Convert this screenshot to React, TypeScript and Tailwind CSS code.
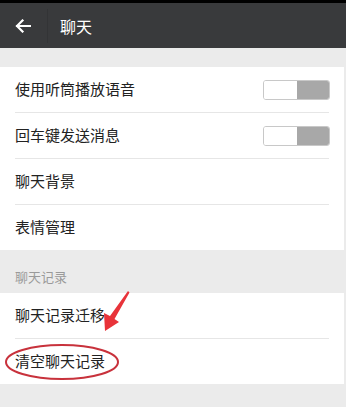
const font = { fontFamily: '"Noto Sans CJK SC", "Noto Sans", sans-serif' };

const Toggle = () => (
  <div className="flex h-[20px] w-[67px] overflow-hidden rounded-[3px] border border-[#c8c8c8]">
    <div className="w-[33px] bg-white" />
    <div className="flex-1 bg-[#a8a8a8]" />
  </div>
);

const Row = ({ label, toggle, divider = true }: { label: string; toggle?: boolean; divider?: boolean }) => (
  <div>
    <div className="flex h-[45px] items-center justify-between pl-[15px] pr-[14px]">
      <span className="text-[15px] text-[#222]">{label}</span>
      {toggle && <Toggle />}
    </div>
    {divider && <div className="mx-[15px] h-px bg-[#e6e6e6]" />}
  </div>
);

export default function App() {
  return (
    <div className="relative h-[407px] w-[346px] overflow-hidden bg-[#ebebeb]" style={font}>
      <div className="h-[3px] bg-black" />
      <div className="flex h-[45px] items-center bg-[#393a3c]">
        <div className="flex w-[47px] items-center justify-center pr-[2px]">
          <svg width="16" height="14" viewBox="0 0 16 14" fill="none">
            <path d="M15 7H2M7.5 1.5 2 7l5.5 5.5" stroke="white" strokeWidth="2.2" strokeLinecap="square" />
          </svg>
        </div>
        <div className="h-[34px] w-px bg-[#333436]" />
        <span className="ml-[12px] text-[16px] text-white">聊天</span>
      </div>
      <div className="h-[19px]" />
      <div className="mr-[2px] bg-white">
        <Row label="使用听筒播放语音" toggle />
        <Row label="回车键发送消息" toggle />
        <Row label="聊天背景" />
        <Row label="表情管理" divider={false} />
      </div>
      <div className="flex h-[43px] items-end pb-[7px] pl-[15px] text-[13px] text-[#9a9a9a]">聊天记录</div>
      <div className="mr-[2px] bg-white">
        <Row label="聊天记录迁移" />
        <Row label="清空聊天记录" divider={false} />
      </div>

      <svg className="pointer-events-none absolute left-0 top-0" width="346" height="407">
        <ellipse cx="62" cy="362" rx="56" ry="17" fill="none" stroke="#c8323c" strokeWidth="2" />
        <path d="M128 291 L129.5 292.5 L114.5 319 L119 322 L105 331 L104 313 L110 316 Z" fill="#e8333a" />
      </svg>
    </div>
  );
}
